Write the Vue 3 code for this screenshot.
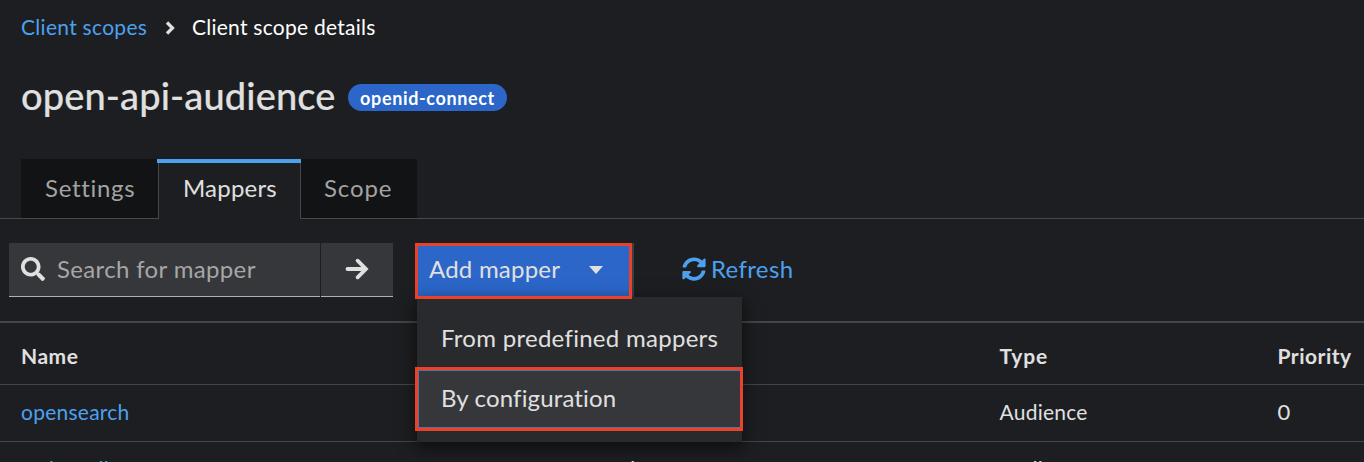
<script setup>
const rows = [
  { name: 'opensearch', category: '', type: 'Audience', priority: '0' },
  { name: 'web-audience', category: 'Token mapper', type: 'Audience', priority: '0' },
]
</script>

<template>
  <main class="page">
    <nav class="crumbs">
      <a class="link c1">Client scopes</a>
      <svg class="chev" viewBox="0 0 10 14"><path d="M2 1.500L7.500 7 2 12.500" /></svg>
      <span class="c2">Client scope details</span>
    </nav>
    <header class="head">
      <h1>open-api-audience</h1>
      <span class="badge"><span>openid-connect</span></span>
    </header>
    <div class="tabs">
      <button class="tab t1">Settings</button>
      <button class="tab t2 active">Mappers</button>
      <button class="tab t3">Scope</button>
    </div>
    <div class="toolbar">
      <div class="search">
        <svg class="mag" viewBox="0 0 512 512"><path d="M505 442.700 405.300 343c-4.500-4.500-10.600-7-17-7H372c27.600-35.300 44-79.700 44-128C416 93.100 322.900 0 208 0S0 93.100 0 208s93.100 208 208 208c48.300 0 92.700-16.400 128-44v16.300c0 6.400 2.500 12.500 7 17l99.700 99.700c9.400 9.400 24.600 9.400 33.900 0l28.300-28.300c9.400-9.400 9.400-24.600.1-34zM208 336c-70.700 0-128-57.200-128-128 0-70.700 57.200-128 128-128 70.700 0 128 57.200 128 128 0 70.700-57.200 128-128 128z" /></svg>
        <span class="placeholder">Search for mapper</span>
      </div>
      <button class="go"><svg viewBox="0 0 24 24"><path d="M2.500 12H20M12.600 3.700l8.300 8.300-8.300 8.300" /></svg></button>
      <div class="dropdown">
        <button class="toggle"><span class="add">Add mapper</span><i class="caret"></i></button>
        <div class="menu">
          <div class="item"><span class="m1">From predefined mappers</span></div>
          <div class="item hover"><span class="m2">By configuration</span></div>
        </div>
        <div class="mark mark-toggle"></div>
        <div class="mark mark-item"></div>
      </div>
      <a class="refresh link">
        <svg viewBox="0 0 512 512"><path d="M370.720 133.280C339.458 104.008 298.888 87.962 255.848 88c-77.458.068-144.328 53.178-162.791 126.850-1.344 5.363-6.122 9.150-11.651 9.150H24.103c-7.498 0-13.194-6.807-11.807-14.176C33.933 94.924 134.813 8 256 8c66.448 0 126.791 26.136 171.315 68.685L463.030 40.970C478.149 25.851 504 36.559 504 57.941V192c0 13.255-10.745 24-24 24H345.941c-21.382 0-32.090-25.851-16.971-40.971l41.750-41.749zM32 296h134.059c21.382 0 32.090 25.851 16.971 40.971l-41.750 41.750c31.262 29.273 71.835 45.319 114.876 45.280 77.418-.070 144.315-53.144 162.787-126.849 1.344-5.363 6.122-9.150 11.651-9.150h57.304c7.498 0 13.194 6.807 11.807 14.176C478.067 417.076 377.187 504 256 504c-66.448 0-126.791-26.136-171.315-68.685L48.970 471.030C33.851 486.149 8 475.441 8 454.059V320c0-13.255 10.745-24 24-24z" /></svg>
        <span>Refresh</span>
      </a>
    </div>
    <section class="table">
      <div class="row header">
        <span class="h1">Name</span><span></span><span class="h3">Type</span><span class="h4">Priority</span>
      </div>
      <div v-for="r in rows" :key="r.name" class="row">
        <span class="link">{{ r.name }}</span><span>{{ r.category }}</span><span>{{ r.type }}</span><span class="num">{{ r.priority }}</span>
      </div>
    </section>
  </main>
</template>

<style>
body { background: #1d1e21; }
</style>

<style scoped>
* { box-sizing: border-box; }
.page { width: 1364px; height: 462px; overflow: hidden; background: #1d1e21; color: #e0e0e0; font-family: Lato, "Liberation Sans", sans-serif; font-variant-ligatures: none; white-space: nowrap; }
button { border: 0; margin: 0; padding: 0; font: inherit; color: inherit; background: none; }
.link { color: #4ca1ee; }
.crumbs { height: 56px; padding: 0 0 3px 21px; display: flex; align-items: center; font-size: 21px; letter-spacing: .25px; color: #fff; }
.chev { width: 10px; height: 14px; margin: 2px 17px 0 18px; fill: none; stroke: #e0e0e0; stroke-width: 3.200; }
.c1 { width: 126px; letter-spacing: .29px; }
.head { height: 103px; padding: 0 0 20px 21px; display: flex; align-items: center; }
h1 { margin: -6px 0 0; width: 327px; font-size: 38px; font-weight: 500; line-height: 44px; letter-spacing: .12px; -webkit-text-stroke: .15px #e0e0e0; }
.badge { width: 159px; height: 27px; border-radius: 14px; background: #2b66c8; color: #fff; display: flex; align-items: center; justify-content: center; font-size: 18px; font-weight: 700; letter-spacing: .63px; }
.tabs { height: 60px; display: flex; padding-left: 21px; background: linear-gradient(#47484b, #47484b) 0 59px / 100% 1px no-repeat; }
.tab { height: 59px; background: #121315; color: #a3a3a3; font-size: 24px; padding: 0 0 2px 23px; text-align: left; }
.t1 { width: 137px; padding-left: 24px; letter-spacing: .7px; }
.t2 { width: 143px; letter-spacing: .2px; }
.t3 { width: 116px; letter-spacing: .9px; }
.tab.active { height: 60px; color: #e0e0e0; background: #1d1e21; border: 1px solid #47484b; border-width: 0 1px; padding: 0 0 3px 24px; position: relative; }
.tab.active::before { content: ""; position: absolute; left: -2px; right: -1px; top: 0; height: 4px; background: #4ca1ee; }
.toolbar { height: 102px; padding: 24px 0 0 9px; display: flex; align-items: flex-start; font-size: 24px; letter-spacing: .35px; }
.search { width: 311px; height: 54px; background: #36373a; border-bottom: 1px solid #b0b1b3; display: flex; align-items: center; padding: 0 0 2px 12px; }
.mag { width: 24px; height: 24px; fill: #e0e0e0; margin-right: 12px; }
.placeholder { color: #a6a6a7; letter-spacing: .35px; }
.go { width: 72px; height: 54px; margin-left: 1px; background: #36373a; border-bottom: 1px solid #b0b1b3; display: flex; align-items: center; justify-content: center; padding-bottom: 2px; }
.go svg { width: 24px; height: 24px; fill: none; stroke: #e0e0e0; stroke-width: 3.8; stroke-linecap: round; }
.dropdown { position: relative; width: 217px; height: 54px; margin-left: 24px; background: #3c3e42; }
.toggle { width: 215px; height: 54px; display: flex; align-items: center; background: #2b66c8; padding-left: 12px; }
.add { width: 160px; text-align: left; padding-bottom: 3px; letter-spacing: .22px; }
.caret { border: 7px solid transparent; border-top: 8px solid #e0e0e0; border-bottom: 0; }
.menu { position: absolute; left: 0; top: 54px; width: 325px; height: 145px; padding-top: 12px; background: #292a2d; box-shadow: 0 5px 16px 1px rgba(0,0,0,.55); }
.item { height: 60px; padding: 0 0 3px 24px; display: flex; align-items: center; }
.item.hover { height: 58px; margin: 1px 1px 0; background: #36373a; border: 1px solid #5c7296; padding-left: 22px; }
.m1 { letter-spacing: .28px; }
.m2 { letter-spacing: .15px; }
.mark { position: absolute; border: 3px solid #e8432a; }
.mark-toggle { left: -2px; top: 0; width: 217px; height: 56px; }
.mark-item { left: -2px; top: 124px; width: 328px; height: 64px; }
.refresh { height: 54px; margin-left: 48px; display: flex; align-items: center; padding-bottom: 3px; }
.refresh svg { width: 24px; height: 24px; fill: currentColor; margin: 1px 5px 0 0; }
.table { border-top: 2px solid #444548; font-size: 21px; letter-spacing: .25px; }
.row { height: 57px; padding: 0 0 3px 21px; display: grid; grid-template-columns: 587px 391.500px 278px 1fr; align-items: center; border-bottom: 1px solid #444548; }
.header { height: 62px; font-weight: 700; padding-top: 7px; }
.h1 { letter-spacing: .5px; }
.h3 { letter-spacing: .9px; }
.h4 { letter-spacing: .5px; }
.num { font-size: 22px; }
</style>
